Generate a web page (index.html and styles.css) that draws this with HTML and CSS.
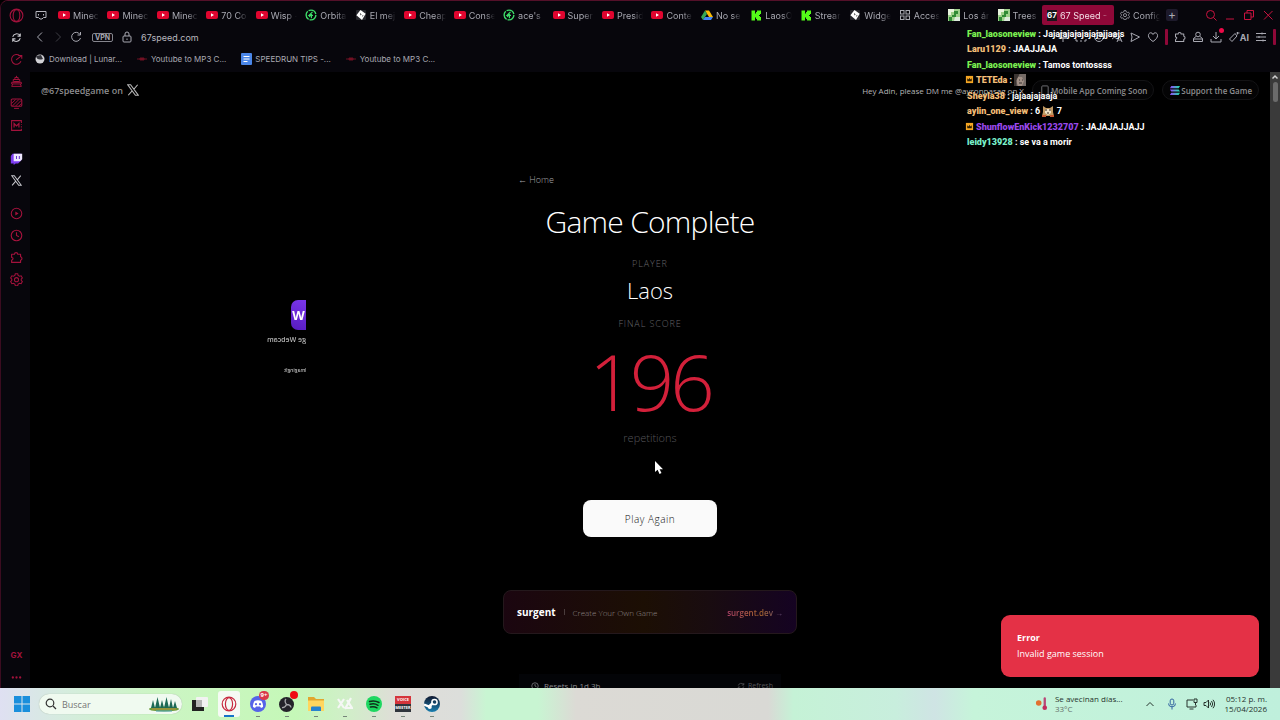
FILE: index.html
```html
<!DOCTYPE html>
<html lang="es">
<head>
    <meta charset="UTF-8">
    <meta name="viewport" content="width=device-width, initial-scale=1.0">
    <title>67 Speed - Game Complete</title>
    <link rel="stylesheet" href="styles.css">
</head>
<body>
    <svg class="sprite" aria-hidden="true">
        <symbol id="yt" viewBox="0 0 12 12"><rect x="0" y="2" width="12" height="8" rx="2" fill="#e0052f"/><path d="M5 4.2v3.6L8 6z" fill="#fff"/></symbol>
        <symbol id="orbit" viewBox="0 0 12 12"><circle cx="6" cy="6" r="4.9" fill="none" stroke="#3ddc68" stroke-width="1.4" stroke-dasharray="9 1"/><path d="M7.5 2.8 4 6.4h4M6.4 5v4.2M4 6.4l1 1.6" fill="none" stroke="#3ddc68" stroke-width="1.2"/></symbol>
        <symbol id="dice" viewBox="0 0 12 12"><rect x="1" y="1" width="10" height="10" rx="1" fill="#26262c"/><path d="m5.5 1 5.2 3.7L7 11 1.4 6.3z" fill="#fff"/><path d="m5 4 1.6 1.2-1 1.2zM7.5 6l1 .6-1 1.4z" fill="#222"/></symbol>
        <symbol id="drive" viewBox="0 0 12 12"><path d="M4 1.5h4L12 8H8z" fill="#fbbc04"/><path d="M4 1.5 6 5 2 11 0 8z" fill="#34a853"/><path d="M4 8h8l-2 3H2z" fill="#4285f4"/></symbol>
        <symbol id="kick" viewBox="0 0 12 12"><path d="M1.500 1.500h3.500v3h1v-1.500h1v-1.500h4v3.500h-1v1h-1v1h1v1h1v3.500h-4v-1.500h-1v-1.500h-1v3h-3.500z" fill="#53fc18"/></symbol>
        <symbol id="blocks" viewBox="0 0 12 12"><g fill="none" stroke="#a9a9b2"><rect x="1.500" y="1.500" width="3.500" height="3.500"/><rect x="7" y="1.500" width="3.500" height="3.500"/><rect x="1.500" y="7" width="3.500" height="3.500"/><rect x="7" y="7" width="3.500" height="3.500"/></g></symbol>
        <symbol id="trees" viewBox="0 0 12 12"><rect width="12" height="12" fill="#9ed08b"/><path d="M0 0h6v3H3v3H0z" fill="#e8f4dd"/><path d="M6 2h4v3H8v3H4V6h2zM1 8h3v4H1z" fill="#2f8b36"/><path d="M7 8h5v4H6z" fill="#dcebdc"/></symbol>
        <symbol id="gear" viewBox="0 0 16 16"><path d="M6.500 1h3l.5 2 1.700 1 2-.6 1.500 2.600-1.400 1.500v1.600l1.400 1.500-1.500 2.600-2-.6-1.700 1-.5 2h-3l-.5-2-1.700-1-2 .6L.8 10.600l1.400-1.500V7.500L.8 6l1.500-2.600 2 .6L6 3z" fill="none" stroke="currentColor" stroke-width="1.300"/><circle cx="8" cy="8.200" r="2.500" fill="none" stroke="currentColor" stroke-width="1.300"/></symbol>
        <symbol id="puzzle" viewBox="0 0 16 16"><path d="M2 4h3.500a2 2 0 1 1 4 0H13v3a2.200 2.200 0 0 1 0 4.300V14H2v-2.500l1.500-1.500a1.400 1.400 0 0 0-1.500-2z" fill="none" stroke="currentColor" stroke-width="1.400" stroke-linejoin="round"/></symbol>
        <symbol id="x" viewBox="0 0 16 16"><path d="M1 1h3.800L15 15h-3.800zM14.200 1 9.100 7M6.600 9.400 1.600 15" fill="none" stroke="currentColor" stroke-width="1.500"/></symbol>
        <symbol id="clock" viewBox="0 0 16 16"><circle cx="8" cy="8" r="6.500" fill="none" stroke="currentColor" stroke-width="1.400"/><path d="M8 4v4l3 1.500" fill="none" stroke="currentColor" stroke-width="1.400"/></symbol>
        <symbol id="opera" viewBox="0 0 16 16"><circle cx="8" cy="8" r="6.800" fill="none" stroke="currentColor" stroke-width="1.200"/><ellipse cx="8" cy="8" rx="3.600" ry="6.300" fill="none" stroke="currentColor" stroke-width="1.200"/></symbol>
        <symbol id="refresh" viewBox="0 0 16 16"><path d="M2.500 7A6 6 0 0 1 13 5M13.500 9A6 6 0 0 1 3 11.500M13.500 2v4h-4M2.500 14v-4h4" fill="none" stroke="currentColor" stroke-width="1.500"/></symbol>
        <symbol id="crown" viewBox="0 0 10 10"><path d="M1 1h8v8H1z" fill="#f5a623"/><path d="M2.500 3.500 4 5l1-2 1 2 1.500-1.500V7h-5z" fill="#2b1c00"/></symbol>
    </svg>

    <div class="browser">
        <nav class="sidebar" aria-label="Opera GX">
            <a href="#" class="side-item" aria-label="Opera"><svg><use href="#opera"/></svg></a>
            <a href="#" class="side-item light" aria-label="Sync"><svg class="small"><use href="#refresh"/></svg></a>
            <a href="#" class="side-item" aria-label="GX Corner"><svg viewBox="0 0 16 16"><path d="M12 3.500A6 6 0 1 0 13.500 10M7.500 8.500 14 3.500M10 3h4.500v4" fill="none" stroke="currentColor" stroke-width="1.300"/></svg></a>
            <a href="#" class="side-item" aria-label="Limiter"><svg viewBox="0 0 16 16"><path d="M4 9V5.500h8V9M6 5.500V3h4v2.500M8 1v2M2 9h12v2H2zM3.500 11 2 14h12l-1.500-3M5 8h6" fill="none" stroke="currentColor" stroke-width="1.200"/></svg></a>
            <a href="#" class="side-item" aria-label="Wallpapers"><svg viewBox="0 0 16 16"><rect x="1.500" y="2.500" width="13" height="9" rx="1.500" fill="none" stroke="currentColor" stroke-width="1.300"/><path d="m2 8 5-5M3 11l8-8M7 11l7-7M11 11l3-3M5 14h6" stroke="currentColor" stroke-width="1.200"/></svg></a>
            <a href="#" class="side-item" aria-label="Mods"><svg viewBox="0 0 16 16"><path d="M14 5V2H2v12h12v-2M14 6.500v1M14 9v1.500" fill="none" stroke="currentColor" stroke-width="1.300"/><path d="M5 10.500v-5l3 3 3-3v5" fill="none" stroke="currentColor" stroke-width="1.500"/></svg></a>
            <a href="#" class="side-item gap" aria-label="Twitch"><svg viewBox="0 0 16 16"><path d="M3 2 1 5v9h3.500v2l2.500-2h3l4-4V2z" fill="#7c3cf0"/><path d="M4.500 2H15v7l-2.500 2.500h-8z" fill="#eee7ff"/><path d="M8 5v3.500M11.500 5v3.500" stroke="#6a35d0" stroke-width="1.300"/></svg></a>
            <a href="#" class="side-item light" aria-label="X"><svg class="small"><use href="#x"/></svg></a>
            <a href="#" class="side-item gap" aria-label="Player"><svg viewBox="0 0 16 16"><circle cx="8" cy="8" r="6.500" fill="none" stroke="currentColor" stroke-width="1.300"/><path d="M6.500 5.500v5l4-2.500z" fill="currentColor"/></svg></a>
            <a href="#" class="side-item" aria-label="Historial"><svg><use href="#clock"/></svg></a>
            <a href="#" class="side-item" aria-label="Extensiones"><svg><use href="#puzzle"/></svg></a>
            <a href="#" class="side-item" aria-label="Ajustes"><svg><use href="#gear"/></svg></a>
            <span class="side-gx">GX</span>
            <a href="#" class="side-item" aria-label="Más"><svg viewBox="0 0 16 16" fill="currentColor"><circle cx="3.500" cy="8" r="1.400"/><circle cx="8" cy="8" r="1.400"/><circle cx="12.500" cy="8" r="1.400"/></svg></a>
        </nav>

        <div class="window">
            <header class="chrome">
                <div class="tab-strip">
                    <svg class="corner-icon" viewBox="0 0 12 12"><path d="M1 2.500h10v6H8.500L7 10H5L3.500 8.500H1z" fill="none" stroke="#b5b5bd"/><path d="M3.500 5v1.500M8.500 5v1.500" stroke="#b5b5bd"/></svg>
                    <div class="tabs">
                        <a href="#" class="tab"><svg><use href="#yt"/></svg><span>Minecr</span></a>
                        <a href="#" class="tab"><svg><use href="#yt"/></svg><span>Minecr</span></a>
                        <a href="#" class="tab"><svg><use href="#yt"/></svg><span>Minecr</span></a>
                        <a href="#" class="tab"><svg><use href="#yt"/></svg><span>70 Co</span></a>
                        <a href="#" class="tab"><svg><use href="#yt"/></svg><span>Wisp -</span></a>
                        <a href="#" class="tab"><svg><use href="#orbit"/></svg><span>Orbita</span></a>
                        <a href="#" class="tab"><svg><use href="#dice"/></svg><span>El mej</span></a>
                        <a href="#" class="tab"><svg><use href="#yt"/></svg><span>Cheap</span></a>
                        <a href="#" class="tab"><svg><use href="#yt"/></svg><span>Conse</span></a>
                        <a href="#" class="tab"><svg><use href="#orbit"/></svg><span>ace's</span></a>
                        <a href="#" class="tab"><svg><use href="#yt"/></svg><span>Super</span></a>
                        <a href="#" class="tab"><svg><use href="#yt"/></svg><span>Presid</span></a>
                        <a href="#" class="tab"><svg><use href="#yt"/></svg><span>Conte</span></a>
                        <a href="#" class="tab"><svg><use href="#drive"/></svg><span>No se</span></a>
                        <a href="#" class="tab"><svg><use href="#kick"/></svg><span>LaosO</span></a>
                        <a href="#" class="tab"><svg><use href="#kick"/></svg><span>Strear</span></a>
                        <a href="#" class="tab"><svg><use href="#dice"/></svg><span>Widge</span></a>
                        <a href="#" class="tab"><svg><use href="#blocks"/></svg><span>Acces</span></a>
                        <a href="#" class="tab"><svg><use href="#trees"/></svg><span>Los ár</span></a>
                        <a href="#" class="tab"><svg><use href="#trees"/></svg><span>Trees</span></a>
                    </div>
                    <a href="#" class="tab active"><b class="badge67">67</b><span>67 Speed - |</span></a>
                    <a href="#" class="tab config"><svg><use href="#gear"/></svg><span>Config</span></a>
                    <button class="new-tab" aria-label="Nueva pestaña">+</button>
                    <div class="window-buttons">
                        <button aria-label="Buscar"><svg viewBox="0 0 12 12"><circle cx="5.500" cy="5.500" r="4"/><path d="m8.500 8.500 3 3"/></svg></button>
                        <button aria-label="Minimizar"><svg viewBox="0 0 12 12"><path d="M2 10h8"/></svg></button>
                        <button aria-label="Restaurar"><svg viewBox="0 0 12 12"><path d="M1.500 4h6.500v6.500H1.500zM4 4V1.500h6.500V8H8"/></svg></button>
                        <button aria-label="Cerrar"><svg viewBox="0 0 12 12"><path d="m2 2 8.500 8.500M10.500 2 2 10.500"/></svg></button>
                    </div>
                </div>

                <div class="address-bar">
                    <button aria-label="Atrás"><svg viewBox="0 0 12 12"><path d="M8 1.500 3.500 6 8 10.500"/></svg></button>
                    <button class="off" aria-label="Adelante"><svg viewBox="0 0 12 12"><path d="M4 1.500 8.500 6 4 10.500"/></svg></button>
                    <button aria-label="Recargar"><svg viewBox="0 0 12 12"><path d="M10 3.500A4.500 4.500 0 1 0 10.500 7M10.500 1v3h-3"/></svg></button>
                    <span class="vpn">VPN</span>
                    <svg class="lock" viewBox="0 0 12 12"><rect x="2" y="5" width="8" height="6" rx="1"/><path d="M4 5V3a2 2 0 0 1 4 0v2M6 7.500v1.500"/></svg>
                    <input class="url" type="text" aria-label="Dirección" value="67speed.com">
                    <div class="tools">
                        <button aria-label="Fijar"><svg viewBox="0 0 12 12"><path d="M3 2h6v5H3zM1.500 7h9M6 7v4"/></svg></button>
                        <button aria-label="Captura"><svg viewBox="0 0 12 12"><path d="M1 4V2h2M9 2h2v2M1 8v2h2M5 10h2M9 10h2V8"/></svg></button>
                        <button aria-label="Emoji"><svg viewBox="0 0 12 12"><circle cx="6" cy="6" r="4.500"/><path d="M4 7q2 2 4 0M4.500 4v1M7.500 4v1"/></svg></button>
                        <button aria-label="Traducir"><svg viewBox="0 0 12 12"><path d="M1 3h6M4 1v2q0 4-3 5M2 5l4 3M6 11l2.500-6L11 11M7 9h3"/></svg></button>
                        <button aria-label="Enviar"><svg viewBox="0 0 12 12"><path d="M2 2l8.500 4L2 10.500 3 6z"/></svg></button>
                        <button aria-label="Favorito"><svg viewBox="0 0 12 12"><path d="M6 10.500C-1 6 1.500 1.500 4 1.800Q5.500 2 6 3.500 6.500 2 8 1.800C10.500 1.500 13 6 6 10.500z"/></svg></button>
                        <i class="divider"></i>
                        <button aria-label="Extensiones"><svg><use href="#puzzle"/></svg></button>
                        <button aria-label="Perfil"><svg viewBox="0 0 12 12"><circle cx="6" cy="3.500" r="2.300"/><path d="M4 5.500 1.500 7.500v3h9v-3L8 5.500M1.500 8h9"/></svg></button>
                        <button class="dot" aria-label="Descargas"><svg viewBox="0 0 12 12"><path d="M6 1v6.500M3 5l3 3 3-3M1 8v3h10V8"/></svg></button>
                        <button class="ai"><svg viewBox="0 0 12 12"><path d="M1.500 8 7 2.500 9 5 4 10.500zM9.500 1v2.500M8.500 2h3"/></svg>AI</button>
                        <button aria-label="Menú"><svg viewBox="0 0 12 12"><path d="M1 2.500h10M1 6h10M1 9.500h10M7 1.500v2M4 5v2M8 8.500v2"/></svg></button>
                        <i class="divider"></i>
                    </div>
                </div>

                <div class="bookmarks">
                    <a href="#"><svg viewBox="0 0 12 12"><circle cx="6" cy="6" r="4.500" fill="#d2d2d6"/><path d="M2 3q1 5 7 3l-2-4z" fill="#33333a"/></svg>Download | Lunar...</a>
                    <a href="#"><svg viewBox="0 0 12 12"><path d="M1 6h10M4 5h4v2H4z" stroke="#6d1022" fill="#8d1226"/></svg>Youtube to MP3 C...</a>
                    <a href="#"><svg viewBox="0 0 12 12"><rect x="1" y="0" width="11" height="12" rx="1" fill="#4a86e8"/><path d="M3.500 3.500h6M3.500 6h6M3.500 8.500h4" stroke="#fff"/></svg>SPEEDRUN TIPS -...</a>
                    <a href="#"><svg viewBox="0 0 12 12"><path d="M1 6h10M4 5h4v2H4z" stroke="#6d1022" fill="#8d1226"/></svg>Youtube to MP3 C...</a>
                </div>
            </header>

            <div class="viewport">
                <div class="page">
                    <div class="top-bar">
                        <a href="#" class="handle">@67speedgame on <svg><use href="#x"/></svg></a>
                        <span class="dm">Hey Adin, please DM me @ayronpasag on X</span>
                        <a href="#" class="pill"><svg viewBox="0 0 12 12"><rect x="3" y="1" width="7" height="10" rx="1" fill="none" stroke="#77777c"/></svg>Mobile App Coming Soon</a>
                        <a href="#" class="pill"><svg viewBox="0 0 12 12"><defs><linearGradient id="sol" x2="1"><stop offset="0" stop-color="#9945ff"/><stop offset="1" stop-color="#19e6a4"/></linearGradient></defs><path d="M2.500 1H12l-1.500 2.500H1zM1 4.800h9.500L12 7.200H2.500zM2.500 8.500H12L10.500 11H1z" fill="url(#sol)"/></svg>Support the Game</a>
                    </div>

                    <div class="webcam" aria-hidden="true">
                        <div class="webcam-logo"><b>W</b></div>
                        <div class="webcam-title">Change Webcam</div>
                        <div class="webcam-note">lmaginglt</div>
                    </div>

                    <main class="result">
                        <a href="#" class="home">← Home</a>
                        <h1>Game Complete</h1>
                        <p class="label">PLAYER</p>
                        <p class="player">Laos</p>
                        <p class="label">FINAL SCORE</p>
                        <p class="score">196</p>
                        <p class="reps">repetitions</p>
                        <button class="play">Play Again</button>
                        <a href="#" class="promo">
                            <strong>surgent</strong>
                            <i></i>
                            <span>Create Your Own Game</span>
                            <em>surgent.dev →</em>
                        </a>
                        <div class="board">
                            <span><svg><use href="#clock"/></svg>Resets in 1d 3h</span>
                            <button><svg><use href="#refresh"/></svg>Refresh</button>
                        </div>
                    </main>
                </div>
                <div class="scrollbar"><svg viewBox="0 0 10 10"><path d="m2.500 6.500 2.500-2.500 2.500 2.500" fill="none" stroke="#d0d0d0" stroke-width="1.500"/></svg><i></i></div>

                <div class="toast" role="alert">
                    <strong>Error</strong>
                    <p>Invalid game session</p>
                </div>
            </div>
        </div>
    </div>

    <ul class="chat">
        <li><b class="green">Fan_laosoneview</b> : Jajajajajajajajajjaajs</li>
        <li><b class="sand">Laru1129</b> : JAAJJAJA</li>
        <li><b class="green">Fan_laosoneview</b> : Tamos tontossss</li>
        <li class="crowned"><svg><use href="#crown"/></svg><b class="sand">TETEda</b> : <svg class="emote" viewBox="0 0 12 12"><rect width="12" height="12" fill="#756b66"/><path d="M3 3h5l2 4-2 5H4L2 7z" fill="#a08f85"/><path d="M0 0h5L2 6v6H0zM5 6h1M8 6h1M5 9h3" fill="#3b3432" stroke="#3b3432"/></svg></li>
        <li><b class="sand">Sheyla38</b> : jajaajajaaja</li>
        <li><b class="sand">aylin_one_view</b> : 6 <svg class="emote" viewBox="0 0 12 12"><path d="M1 1l3 2h4l3-2v6l1 4H0l1-4z" fill="#c29a62"/><path d="M3 4h6v4l-3 2-3-2z" fill="#efe2c6"/><path d="M3 5h2M7 5h2M5 8h2" stroke="#35261c"/><path d="M0 10h4v2H0zM8 10h4v2H8z" fill="#c25a32"/></svg> 7</li>
        <li class="crowned"><svg><use href="#crown"/></svg><b class="purple">ShunflowEnKick1232707</b> : JAJAJAJJAJJ</li>
        <li><b class="mint">leidy13928</b> : se va a morir</li>
    </ul>

    <svg class="cursor" viewBox="0 0 10 14"><path d="M1 0v11l2.600-2.300L5.500 13l2-1-1.900-3.800H9z" fill="#fff"/></svg>

    <footer class="taskbar">
        <button class="app start" aria-label="Inicio"><svg viewBox="0 0 16 16"><path d="M0 0h7.500v7.500H0zM8.500 0H16v7.500H8.500zM0 8.500h7.500V16H0zM8.500 8.500H16V16H8.500z" fill="#1a8fdc"/></svg></button>
        <label class="search">
            <svg viewBox="0 0 12 12"><circle cx="5" cy="5" r="3.800" fill="none" stroke="#333" stroke-width="1.200"/><path d="m8 8 3 3" stroke="#333" stroke-width="1.200"/></svg>
            <input type="text" placeholder="Buscar" aria-label="Buscar">
            <svg class="forest" viewBox="0 0 32 16"><ellipse cx="16" cy="13" rx="15" ry="2.500" fill="#6f9c3a"/><path d="M3 12 5 4l2 8zM7 12l2.500-11L12 12zM12 12l2-8 2 8zM16 12l2.500-11L21 12zM21 12l2-9 2 9zM25 12l2-7 2 7z" fill="#1c6a55"/><path d="M4 13h24" stroke="#b98d3b"/><path d="M8 15h16" stroke="#4aa3b8"/></svg>
        </label>
        <div class="apps">
            <button class="app" aria-label="Vista de tareas"><svg viewBox="0 0 16 16"><rect x="4" y="1" width="12" height="10" rx="1" fill="#f2f2f2"/><path d="M0 4h4v7h8v4H0z" fill="#222"/><path d="M4 4h6v7H4z" fill="#b4b4b4"/></svg></button>
            <button class="app current red" aria-label="Opera GX"><svg><use href="#opera"/></svg></button>
            <button class="app running" aria-label="Discord"><svg viewBox="0 0 16 16"><circle cx="8" cy="8" r="8" fill="#5563e8"/><path d="M4.500 5Q8 3.500 11.500 5q2 3 1.500 6l-2 1-1-1.500H6L5 12l-2-1q-.5-3 1.500-6z" fill="#fff"/><circle cx="6" cy="8.200" r="1.100" fill="#5563e8"/><circle cx="10" cy="8.200" r="1.100" fill="#5563e8"/></svg><small>9+</small></button>
            <button class="app running" aria-label="OBS"><svg viewBox="0 0 16 16"><circle cx="7.500" cy="8.500" r="7.500" fill="#24232a"/><path d="M7.500 8.500Q5 5 7 3M7.500 8.500q4 0 4.500 3M7.500 8.500Q6 12 3 11.500" fill="none" stroke="#a6a6aa" stroke-width="1.300"/></svg><small class="plain"></small></button>
            <button class="app running" aria-label="Archivos"><svg viewBox="0 0 16 16"><path d="M0 1h6l2 2h8v12H0z" fill="#e2a62f"/><path d="M0 4.500h16V15H0z" fill="#ffd65e"/><path d="M3 15v-3.500q0-1 1-1h8q1 0 1 1V15z" fill="#2683cf"/></svg></button>
            <button class="app running" aria-label="Editor"><svg viewBox="0 0 16 16"><path d="m1 3 6 9m0-9-6 9M14 2 8 13M10 4l5 8H9" fill="none" stroke="#f5f7f5" stroke-width="2.200"/></svg></button>
            <button class="app running" aria-label="Spotify"><svg viewBox="0 0 16 16"><circle cx="8" cy="8" r="8" fill="#1ed760"/><path d="M3.500 5.500q5-1.500 9.500 1M4 8.300q4.500-1.300 8 1M4.500 11q3.500-1 6.500.8" fill="none" stroke="#102d1a" stroke-width="1.500" stroke-linecap="round"/></svg></button>
            <button class="app running" aria-label="Voicemeeter"><span class="voice"><b>VOICE</b><b>MEETER</b></span></button>
            <button class="app running" aria-label="Steam"><svg viewBox="0 0 16 16"><defs><linearGradient id="stm" y2="1" x2="0"><stop offset="0" stop-color="#10182f"/><stop offset="1" stop-color="#1a7fb0"/></linearGradient></defs><circle cx="8" cy="8" r="8" fill="url(#stm)"/><path d="m0 8.500 5 2 4-3.500" fill="none" stroke="#fff" stroke-width="2.400"/><circle cx="10.500" cy="6" r="2.600" fill="none" stroke="#fff" stroke-width="1.500"/><circle cx="5.800" cy="11" r="2" fill="#fff"/></svg></button>
        </div>
        <div class="tray">
            <div class="weather">
                <svg viewBox="0 0 14 14"><circle cx="4" cy="6" r="3" fill="#e2702f"/><path d="M10.500 1v9" stroke="#b94777" stroke-width="2.500" stroke-linecap="round"/><circle cx="10.500" cy="11" r="2.500" fill="#c22d5c"/></svg>
                <p>Se avecinan días...<br><span>33°C</span></p>
            </div>
            <svg viewBox="0 0 12 12"><path d="m2.500 8 3.500-3.500L9.500 8"/></svg>
            <svg class="mic" viewBox="0 0 12 12"><rect x="4.200" y="1" width="3.600" height="6" rx="1.800"/><path d="M2.500 5.500q0 3.300 3.500 3.300t3.500-3.300M6 9v2.500"/></svg>
            <svg class="net" viewBox="0 0 12 12"><path d="M7 2H1v7h9V7M3.500 11h4M8 1h3v3.500H8zM9.500 4.500V7"/></svg>
            <svg viewBox="0 0 12 12"><path d="M1 4.500h2L5.500 2v8L3 7.500H1zM7 4.500q1.200 1.500 0 3M8.500 3q2.500 3 0 6M10 1.800q3.300 4.200 0 8.400"/></svg>
            <p class="date">05:12 p. m.<br>15/04/2026</p>
        </div>
    </footer>
</body>
</html>
```
FILE: styles.css
```css
:root {
    --chrome: #07060c;
    --pink: #a3123c;
    --accent: #8f0838;
    --text: #a9a9b2;
    --red: #e43146;
}

* {
    box-sizing: border-box;
}

body {
    margin: 0;
    height: 100vh;
    display: flex;
    flex-direction: column;
    overflow: hidden;
    background: #000;
    color: #fff;
    font-family: "Open Sans", "Noto Sans", sans-serif;
}

p,
h1,
ul {
    margin: 0;
    padding: 0;
}

a {
    color: inherit;
    text-decoration: none;
}

button {
    border: 0;
    padding: 0;
    background: none;
    color: inherit;
    font: inherit;
}

svg {
    flex: none;
    width: 12px;
    height: 12px;
}

.sprite {
    position: absolute;
    width: 0;
    height: 0;
}

/* browser frame */
.browser {
    flex: 1;
    min-height: 0;
    display: flex;
    border-top: 1px solid #541029;
    border-left: 1px solid #3b0c20;
    border-top-left-radius: 8px;
    overflow: hidden;
}

.sidebar {
    width: 29px;
    display: flex;
    flex-direction: column;
    align-items: center;
    padding: 3px 0 0 2px;
    background: var(--chrome);
    color: var(--pink);
}

.side-item {
    height: 22px;
    display: flex;
    align-items: center;
}

.side-item svg {
    width: 13px;
    height: 13px;
}

.side-item:first-child svg {
    width: 15px;
    height: 15px;
}

.side-item svg.small {
    width: 11px;
    height: 11px;
}

.side-item.light {
    color: #c8c8ce;
}

.side-item.gap {
    margin-top: 11px;
}

.side-gx {
    margin-top: auto;
    font: 700 8px/22px Inter, sans-serif;
}

.window {
    flex: 1;
    min-width: 0;
    display: flex;
    flex-direction: column;
}

.chrome {
    background: var(--chrome);
    color: var(--text);
    font-family: Inter, sans-serif;
    font-size: 9px;
}

.tab-strip {
    height: 25px;
    display: flex;
    align-items: center;
    padding: 3px 6px 0 5px;
}

.corner-icon {
    margin-right: 10px;
}

.tabs {
    flex: 1;
    min-width: 0;
    display: flex;
}

.tab {
    flex: 1;
    min-width: 0;
    display: flex;
    align-items: center;
    gap: 3px;
    padding: 0 7px 0 1px;
}

.tab span {
    flex: 1;
    overflow: hidden;
    white-space: nowrap;
    mask-image: linear-gradient(to right, #000 60%, transparent);
}

.tab.active {
    flex: none;
    width: 72px;
    height: 20px;
    margin-left: -4px;
    padding: 0 5px;
    border-radius: 2px;
    background: var(--accent);
    color: #f4dfe6;
}

.tab.active span {
    mask-image: linear-gradient(to right, #000 80%, transparent);
}

.badge67 {
    width: 10px;
    background: #16161a;
    color: #fff;
    font-size: 8px;
    line-height: 11px;
    text-align: center;
}

.tab.config {
    flex: none;
    width: 46px;
    padding: 0 0 0 6px;
}

.tab.config svg {
    width: 10px;
    height: 10px;
}

.new-tab {
    width: 12px;
    height: 12px;
    margin-left: 6px;
    border-radius: 2px;
    background: #1d1a2b;
    font-size: 12px;
    line-height: 10px;
}

.window-buttons {
    display: flex;
    gap: 7px;
    margin-left: 27px;
    color: #c9123f;
}

.window-buttons button,
.tools button {
    display: flex;
}

.window-buttons svg,
.address-bar svg {
    fill: none;
    stroke: currentColor;
}

.address-bar {
    height: 22px;
    display: flex;
    align-items: center;
    gap: 6px;
    padding: 0 4px;
}

.address-bar button {
    display: flex;
}

.off {
    opacity: 0.35;
}

.vpn {
    margin-left: 4px;
    padding: 0 2px;
    border: 1px solid #85858d;
    border-radius: 2px;
    font-size: 7px;
    font-weight: 700;
    line-height: 7px;
}

.lock {
    margin-left: 2px;
}

.url {
    flex: 1;
    min-width: 0;
    padding: 0 2px;
    border: 0;
    background: none;
    color: #b7b7bf;
    font: 9px Inter, sans-serif;
}

.tools {
    display: flex;
    align-items: center;
    gap: 6px;
}

.divider {
    width: 3px;
    height: 16px;
    border-radius: 1px;
    background: var(--accent);
}

.dot {
    position: relative;
}

.dot::after {
    content: '';
    position: absolute;
    top: -3px;
    right: -2px;
    width: 5px;
    height: 5px;
    border-radius: 50%;
    background: #ec0a48;
}

.ai {
    align-items: center;
    font-weight: 700;
}

.bookmarks {
    height: 24px;
    display: flex;
    align-items: center;
    gap: 14px;
    padding: 0 4px 2px;
    font-size: 8px;
}

.bookmarks a {
    display: flex;
    align-items: center;
    gap: 3px;
}

/* game page */
.viewport {
    position: relative;
    flex: 1;
    min-height: 0;
    display: flex;
    overflow: hidden;
}

.page {
    position: relative;
    flex: 1;
    min-width: 0;
}

.scrollbar {
    width: 10px;
    display: flex;
    flex-direction: column;
    align-items: center;
    background: #3a3a3a;
}

.scrollbar svg {
    width: 10px;
    height: 10px;
}

.scrollbar i {
    width: 5px;
    height: 20px;
    border-radius: 3px;
    background: #6b6b6b;
}

.top-bar {
    display: flex;
    align-items: center;
    gap: 8px;
    padding: 8px 11px;
    color: #77777c;
    font-size: 8px;
}

.handle {
    display: flex;
    align-items: center;
    gap: 4px;
    margin-right: auto;
    color: #8d8d8f;
    font-size: 9px;
    font-weight: 600;
}

.handle svg {
    color: #b5b5b5;
}

.dm {
    color: #b5b5b5;
}

.pill {
    display: flex;
    align-items: center;
    gap: 1px;
    height: 20px;
    padding: 0 6px;
    border: 1px solid #131315;
    border-radius: 10px;
    background: #040405;
    color: #8d8d8f;
    font-weight: 600;
}

.pill svg {
    width: 11px;
    height: 11px;
}

/* mirrored camera picture, cut at its edge */
.webcam {
    position: absolute;
    top: 228px;
    left: 226px;
    width: 50px;
    display: flex;
    flex-direction: column;
    align-items: flex-start;
    overflow: hidden;
    transform: scaleX(-1);
    direction: rtl;
    white-space: nowrap;
    color: #b5b5b5;
}

.webcam-logo {
    align-self: flex-end;
    width: 15px;
    height: 30px;
    border-radius: 0 7px 7px 0;
    background: linear-gradient(160deg, #7a36ea, #571bc0);
    color: #fff;
    font-size: 13px;
    line-height: 30px;
    text-align: center;
}

.webcam-title {
    width: 39px;
    align-self: flex-end;
    margin-top: 5px;
    font-size: 7px;
    font-weight: 600;
    line-height: 10px;
}

.webcam-note {
    width: 22px;
    align-self: flex-end;
    margin-top: 21px;
    font-size: 5px;
    font-weight: 600;
    line-height: 8px;
}

.result {
    width: 294px;
    margin: 0 auto;
    padding-top: 64px;
    display: flex;
    flex-direction: column;
    align-items: center;
}

.home {
    align-self: flex-start;
    margin-left: 15px;
    color: #a5a5a9;
    font-size: 9px;
    font-weight: 300;
    line-height: 16px;
}

.result h1 {
    margin-top: 12px;
    font-size: 30px;
    font-weight: 300;
    line-height: 44px;
    letter-spacing: -0.025em;
}

.label {
    margin-top: 12px;
    color: #65656a;
    font-size: 9px;
    font-weight: 300;
    line-height: 16px;
    letter-spacing: 0.1em;
}

.player {
    font-size: 22px;
    font-weight: 300;
    line-height: 36px;
}

.player + .label {
    margin-top: 8px;
}

.score {
    color: #d3203a;
    font-size: 78px;
    font-weight: 300;
    line-height: 98px;
    letter-spacing: -0.05em;
}

.reps {
    color: #55555a;
    font-size: 11px;
    font-weight: 300;
    line-height: 16px;
}

.play {
    width: 134px;
    height: 37px;
    margin-top: 54px;
    border-radius: 8px;
    background: #fafafa;
    color: #111;
    font-size: 10px;
    font-weight: 300;
    letter-spacing: 0.05em;
}

.promo {
    width: 100%;
    height: 44px;
    margin-top: 53px;
    padding: 0 13px;
    display: flex;
    align-items: center;
    gap: 8px;
    border: 1px solid #24181c;
    border-radius: 8px;
    background: linear-gradient(to right, #1b0610, #1c0f04 48%, #190c10 70%, #150322);
    font-size: 8px;
}

.promo strong {
    font-size: 10px;
}

.promo i {
    width: 1px;
    height: 6px;
    background: #4a3c3c;
}

.promo span {
    color: #8d8584;
    font-weight: 300;
}

.promo em {
    margin-left: auto;
    background: linear-gradient(to right, #b3456b, #a8652c 60%, #5f4a7c);
    background-clip: text;
    color: transparent;
    font-style: normal;
    font-weight: 600;
}

.board {
    width: 262px;
    margin-top: 40px;
    padding: 4px 8px 4px 12px;
    display: flex;
    justify-content: space-between;
    background: #030407;
    color: #8b8b90;
    font-size: 8px;
    line-height: 16px;
}

.board span,
.board button {
    display: flex;
    align-items: center;
    gap: 5px;
}

.board svg {
    width: 8px;
    height: 8px;
}

.board button {
    gap: 3px;
    color: #55555a;
    font-size: 7px;
}

.toast {
    position: absolute;
    right: 21px;
    bottom: 11px;
    width: 258px;
    padding: 15px 16px;
    border-radius: 9px;
    background: var(--red);
    font-size: 9px;
    line-height: 16px;
}

/* stream chat over the page */
.chat {
    position: absolute;
    top: 26px;
    left: 967px;
    height: 124px;
    display: grid;
    grid-template-rows: repeat(8, 1fr);
    align-items: center;
    list-style: none;
    font: 700 9px Roboto, sans-serif;
    white-space: nowrap;
}

.chat svg {
    width: 9px;
    height: 9px;
    margin-right: 2px;
    vertical-align: -1px;
}

.chat .crowned {
    margin-left: -2px;
}

.chat .emote {
    width: 12px;
    height: 12px;
    margin: 0;
    vertical-align: -3px;
}

.green {
    color: #7bf051;
}

.sand {
    color: #f2bd77;
}

.purple {
    color: #9a48ea;
}

.mint {
    color: #7af0cb;
}

.cursor {
    position: absolute;
    top: 461px;
    left: 654px;
    width: 10px;
    height: 14px;
}

/* windows taskbar */
.taskbar {
    height: 32px;
    display: flex;
    align-items: center;
    padding: 0 13px;
    background: linear-gradient(to right, #dfe0f2, #d5ecde 5%, #ccf5c4 12%, #c5f8b8 23%, #d0efc8 27%, #dfddd8 31%, #dcdedb 36%, #c8f5d2 38%, #c8f5d2 42%, #dcdad5 45%, #d9d9d5 60%, #c5f2d6 62%, #c8eedd 70%, #cfe4e4 73%, #c6f4da 76%, #bff0dc);
    color: #26332d;
    font-size: 8px;
}

.app {
    position: relative;
    width: 22px;
    height: 26px;
    display: flex;
    align-items: center;
    justify-content: center;
}

.app svg {
    width: 16px;
    height: 16px;
}

.start {
    width: 17px;
}

.search {
    width: 143px;
    height: 20px;
    margin: 0 7px 0 9px;
    padding: 0 2px 0 6px;
    display: flex;
    align-items: center;
    gap: 5px;
    border-radius: 10px;
    background: #f0faf0;
    box-shadow: 0 0 1px #9bab9b;
}

.search input {
    flex: 1;
    min-width: 0;
    padding: 0;
    border: 0;
    background: none;
    font: 9px "Open Sans", sans-serif;
}

.search .forest {
    width: 32px;
    height: 16px;
}

.apps {
    display: flex;
    gap: 7px;
}

.current {
    border-radius: 3px;
    background: #f5faf4;
}

.red {
    color: #c8283f;
}

.running::after,
.current::after {
    content: '';
    position: absolute;
    bottom: 0;
    width: 4px;
    height: 1px;
    background: #77857a;
}

.current::after {
    width: 10px;
    height: 2px;
    background: #1473c8;
}

.app small {
    position: absolute;
    top: 0;
    right: 0;
    width: 10px;
    height: 9px;
    border-radius: 5px;
    background: #d9394a;
    color: #fff;
    font-size: 6px;
    font-weight: 700;
    line-height: 9px;
}

.app .plain {
    width: 8px;
    height: 8px;
    background: #f00a14;
}

.voice {
    width: 16px;
    display: grid;
    background: #30343c;
    color: #fff;
    font-size: 4px;
    line-height: 8px;
}

.voice b:first-child {
    background: #d5343b;
}

.tray {
    margin-left: auto;
    display: flex;
    align-items: center;
    gap: 8px;
    line-height: 10px;
}

.tray svg {
    fill: none;
    stroke: #26332d;
}

.tray .mic {
    margin-left: 2px;
    stroke: #3263a0;
}

.tray .net {
    margin-right: -3px;
}

.weather {
    display: flex;
    align-items: center;
    gap: 7px;
    margin-right: 13px;
}

.tray .weather svg {
    width: 13px;
    height: 14px;
    stroke: none;
}

.weather span {
    color: #647069;
}

.date {
    margin-left: 2px;
    text-align: right;
}
```
